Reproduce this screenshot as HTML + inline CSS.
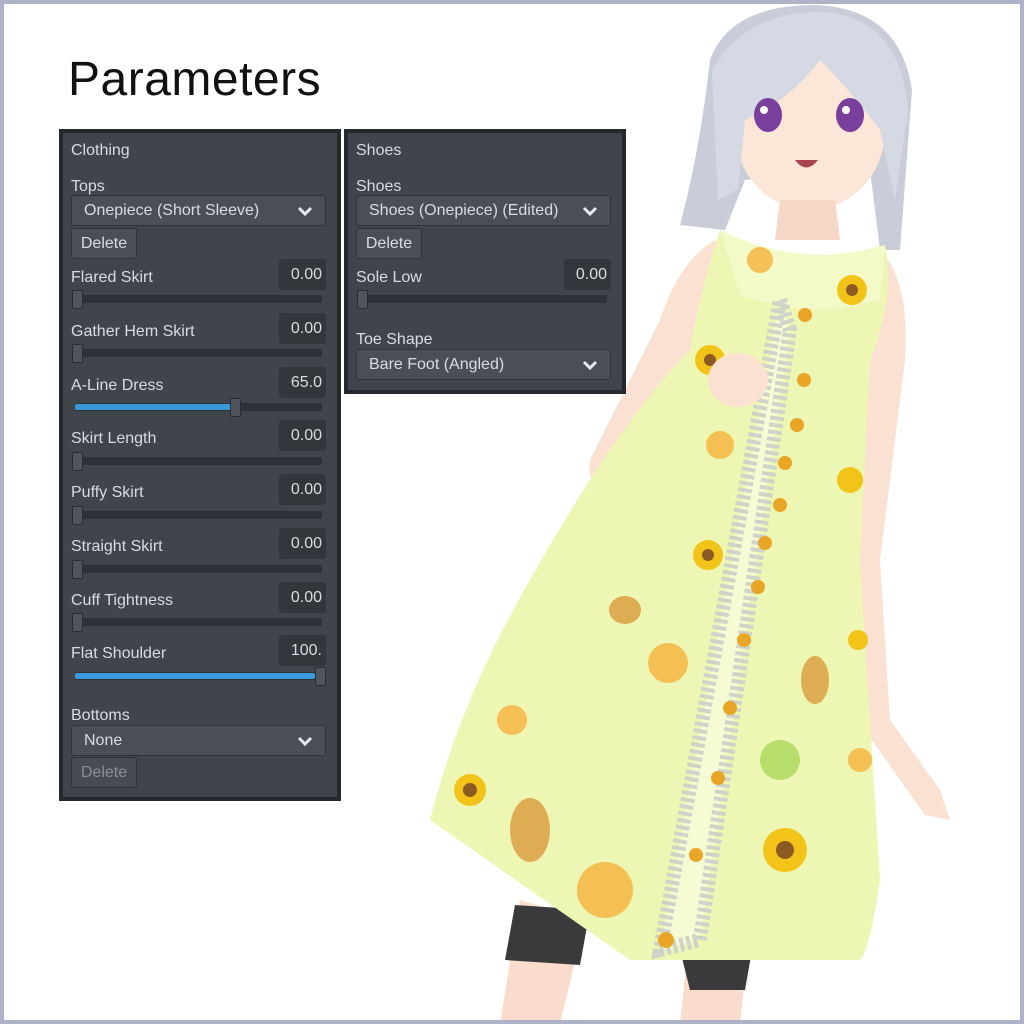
<!DOCTYPE html>
<html><head><style>
*{box-sizing:border-box;margin:0;padding:0}
body{width:1024px;height:1024px;position:relative;background:#fff;overflow:hidden;font-family:"Liberation Sans",sans-serif}
.frame{position:absolute;inset:0;border:4px solid #aeb3c9;z-index:10;pointer-events:none}
h1{position:absolute;left:68px;top:52px;font-weight:400;font-size:48px;color:#111;letter-spacing:0.5px}
.panel{position:absolute;background:#40454c;border:4px solid #25282c;color:#d9dce0;font-size:16px}
.t{position:absolute;left:8px}
.dd{position:absolute;left:8px;height:31px;background:#4a4f56;border:1px solid #2f3338;border-radius:3px;padding:6px 12px}
.dd svg{position:absolute;right:12px;top:10px}
.btn{position:absolute;left:8px;width:66px;height:31px;background:#4a4f56;border:1px solid #2f3338;border-radius:3px;padding:6px 0;text-align:center}
.val{position:absolute;width:47px;height:31px;background:#33373c;border-radius:3px;text-align:right;padding:7px 4px 0 0}
.tr{position:absolute;left:12px;height:8px;background:#2e3237;border-radius:2px}
.fill{position:absolute;left:0;top:1px;height:6px;background:#3a9ad9;border-radius:2px}
.hd{position:absolute;width:11px;height:19px;background:#50555c;border:1px solid #2a2d31;border-radius:2px}
</style></head><body>
<svg width="1024" height="1024" style="position:absolute;left:0;top:0">
<path d="M520 900 L500 1024 L560 1024 L585 920Z" fill="#f9dccb"/>
<path d="M690 930 L680 1024 L740 1024 L750 930Z" fill="#f9dccb"/>
<path d="M515 905 L505 960 L580 965 L590 910Z" fill="#3a3a3c"/>
<path d="M680 950 L690 990 L745 990 L752 950Z" fill="#3a3a3c"/>
<path d="M710 60 Q730 5 815 5 Q900 8 912 90 L900 250 L880 250 L870 170 L745 180 L725 230 L680 225 Q700 150 710 60Z" fill="#c9cdd9"/>
<path d="M715 240 Q680 260 660 320 L590 460 Q585 495 620 490 L700 410 L730 380 L760 300Z" fill="#fae1d1"/>
<path d="M880 250 Q910 280 905 360 L880 560 L890 720 L940 790 L950 820 L925 815 L900 780 L865 730 L855 600 L860 420Z" fill="#fae1d1"/>
<ellipse cx="810" cy="130" rx="75" ry="80" fill="#fbe6d7"/>
<path d="M780 200 L775 240 L840 240 L835 200Z" fill="#f6d6c4"/>
<path d="M720 230 Q800 270 885 245 Q895 300 870 360 L860 560 L880 880 Q870 950 860 960 L630 960 L430 820 Q460 700 530 580 Q620 420 690 350 Q700 290 720 230Z" fill="#eef6b4"/>
<path d="M720 230 Q800 270 885 245 L880 300 Q810 320 740 295Z" fill="#f4f9c8"/>
<path d="M780 300 L790 330 L700 940 L660 950Z" fill="#f7fbd4" stroke="#cfd4c8" stroke-width="14" stroke-dasharray="4 3"/>
<g fill="#e9a526">
<circle cx="805" cy="315" r="7"/><circle cx="804" cy="380" r="7"/><circle cx="797" cy="425" r="7"/><circle cx="785" cy="463" r="7"/><circle cx="780" cy="505" r="7"/><circle cx="765" cy="543" r="7"/><circle cx="758" cy="587" r="7"/><circle cx="744" cy="640" r="7"/><circle cx="730" cy="708" r="7"/><circle cx="718" cy="778" r="7"/><circle cx="696" cy="855" r="7"/><circle cx="666" cy="940" r="8"/>
</g>
<g fill="#f5b642" opacity=".85">
<circle cx="668" cy="663" r="20"/><circle cx="605" cy="890" r="28"/><circle cx="512" cy="720" r="15"/><circle cx="760" cy="260" r="13"/><circle cx="860" cy="760" r="12"/><circle cx="720" cy="445" r="14"/>
</g>
<g fill="#d99a3a" opacity=".8">
<ellipse cx="530" cy="830" rx="20" ry="32"/><ellipse cx="815" cy="680" rx="14" ry="24"/><ellipse cx="625" cy="610" rx="16" ry="14"/>
</g>
<g fill="#f2c419"><circle cx="785" cy="850" r="22"/><circle cx="470" cy="790" r="16"/><circle cx="708" cy="555" r="15"/><circle cx="852" cy="290" r="15"/><circle cx="710" cy="360" r="15"/><circle cx="850" cy="480" r="13"/><circle cx="858" cy="640" r="10"/></g>
<g fill="#8c5a23"><circle cx="785" cy="850" r="9"/><circle cx="470" cy="790" r="7"/><circle cx="708" cy="555" r="6"/><circle cx="852" cy="290" r="6"/><circle cx="710" cy="360" r="6"/></g>
<circle cx="780" cy="760" r="20" fill="#b7dd6a"/>
<ellipse cx="738" cy="380" rx="30" ry="27" fill="#fae1d1"/>
<path d="M712 70 Q745 12 820 12 Q900 15 908 110 L895 200 L880 130 Q850 90 820 60 Q790 100 745 120 L738 190 L718 200Z" fill="#d5d9e4"/>
<ellipse cx="768" cy="115" rx="14" ry="17" fill="#7a3e9c"/>
<ellipse cx="850" cy="115" rx="14" ry="17" fill="#7a3e9c"/>
<circle cx="764" cy="110" r="4" fill="#fff"/><circle cx="846" cy="110" r="4" fill="#fff"/>
<path d="M795 160 Q806 175 818 160Z" fill="#a8444d"/>
</svg>
<h1>Parameters</h1>

<div class="panel" style="left:59px;top:129px;width:282px;height:672px">
<div class="t" style="top:9px">Clothing</div>
<div class="t" style="top:45px">Tops</div>
<div class="dd" style="top:62px;width:255px">Onepiece (Short Sleeve)<svg width="16" height="10"><path d="M2 2 L8 8 L14 2" stroke="#e6e8eb" stroke-width="3" fill="none"/></svg></div>
<div class="btn" style="top:95px">Delete</div>

<div class="t" style="top:136px">Flared Skirt</div><div class="val" style="left:216px;top:126px">0.00</div>
<div class="tr" style="top:162px;width:247px"></div><div class="hd" style="left:9px;top:157px"></div>

<div class="t" style="top:190px">Gather Hem Skirt</div><div class="val" style="left:216px;top:180px">0.00</div>
<div class="tr" style="top:216px;width:247px"></div><div class="hd" style="left:9px;top:211px"></div>

<div class="t" style="top:244px">A-Line Dress</div><div class="val" style="left:216px;top:234px">65.0</div>
<div class="tr" style="top:270px;width:247px"><div class="fill" style="width:160px"></div></div><div class="hd" style="left:167px;top:265px"></div>

<div class="t" style="top:297px">Skirt Length</div><div class="val" style="left:216px;top:287px">0.00</div>
<div class="tr" style="top:324px;width:247px"></div><div class="hd" style="left:9px;top:319px"></div>

<div class="t" style="top:351px">Puffy Skirt</div><div class="val" style="left:216px;top:341px">0.00</div>
<div class="tr" style="top:378px;width:247px"></div><div class="hd" style="left:9px;top:373px"></div>

<div class="t" style="top:405px">Straight Skirt</div><div class="val" style="left:216px;top:395px">0.00</div>
<div class="tr" style="top:432px;width:247px"></div><div class="hd" style="left:9px;top:427px"></div>

<div class="t" style="top:459px">Cuff Tightness</div><div class="val" style="left:216px;top:449px">0.00</div>
<div class="tr" style="top:485px;width:247px"></div><div class="hd" style="left:9px;top:480px"></div>

<div class="t" style="top:512px">Flat Shoulder</div><div class="val" style="left:216px;top:502px">100.</div>
<div class="tr" style="top:539px;width:247px"><div class="fill" style="width:240px"></div></div><div class="hd" style="left:252px;top:534px"></div>

<div class="t" style="top:574px">Bottoms</div>
<div class="dd" style="top:592px;width:255px">None<svg width="16" height="10"><path d="M2 2 L8 8 L14 2" stroke="#e6e8eb" stroke-width="3" fill="none"/></svg></div>
<div class="btn" style="top:624px;color:#8a8f95;background:#474c52">Delete</div>
</div>

<div class="panel" style="left:344px;top:129px;width:282px;height:265px">
<div class="t" style="top:9px">Shoes</div>
<div class="t" style="top:45px">Shoes</div>
<div class="dd" style="top:62px;width:255px">Shoes (Onepiece) (Edited)<svg width="16" height="10"><path d="M2 2 L8 8 L14 2" stroke="#e6e8eb" stroke-width="3" fill="none"/></svg></div>
<div class="btn" style="top:95px">Delete</div>
<div class="t" style="top:136px">Sole Low</div><div class="val" style="left:216px;top:126px">0.00</div>
<div class="tr" style="top:162px;width:247px"></div><div class="hd" style="left:9px;top:157px"></div>
<div class="t" style="top:198px">Toe Shape</div>
<div class="dd" style="top:216px;width:255px">Bare Foot (Angled)<svg width="16" height="10"><path d="M2 2 L8 8 L14 2" stroke="#e6e8eb" stroke-width="3" fill="none"/></svg></div>
</div>
<div class="frame"></div>
</body></html>
